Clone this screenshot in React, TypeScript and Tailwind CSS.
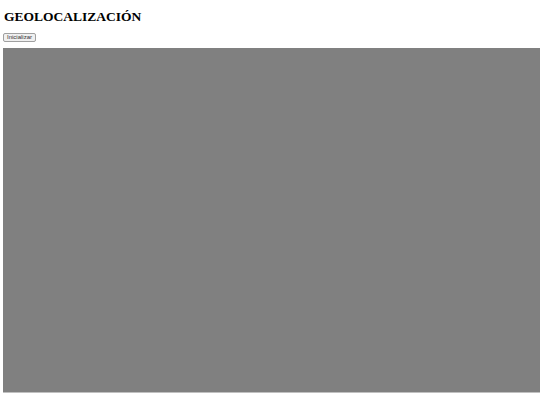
export default function App() {
  return (
    <div className="bg-white min-h-[405px] pl-[3px] pt-[9px]" style={{ fontFamily: '"Liberation Serif", serif' }}>
      <h2 className="text-[13.5px] font-bold leading-[16px] text-black pl-[1px]">GEOLOCALIZACIÓN</h2>
      <div className="mt-[8px] mb-[6px] flex">
        <button className="h-[9px] px-[3px] text-[6px] leading-[7px] bg-[#f0f0f0] border border-[#a0a0a0] rounded-[2px] text-[#333]" style={{ fontFamily: '"Liberation Sans", sans-serif' }}>
          Inicializar
        </button>
      </div>
      <div className="h-[345px] w-[560px] bg-[#808080] border-b border-[#c0c0c0]"></div>
    </div>
  );
}
